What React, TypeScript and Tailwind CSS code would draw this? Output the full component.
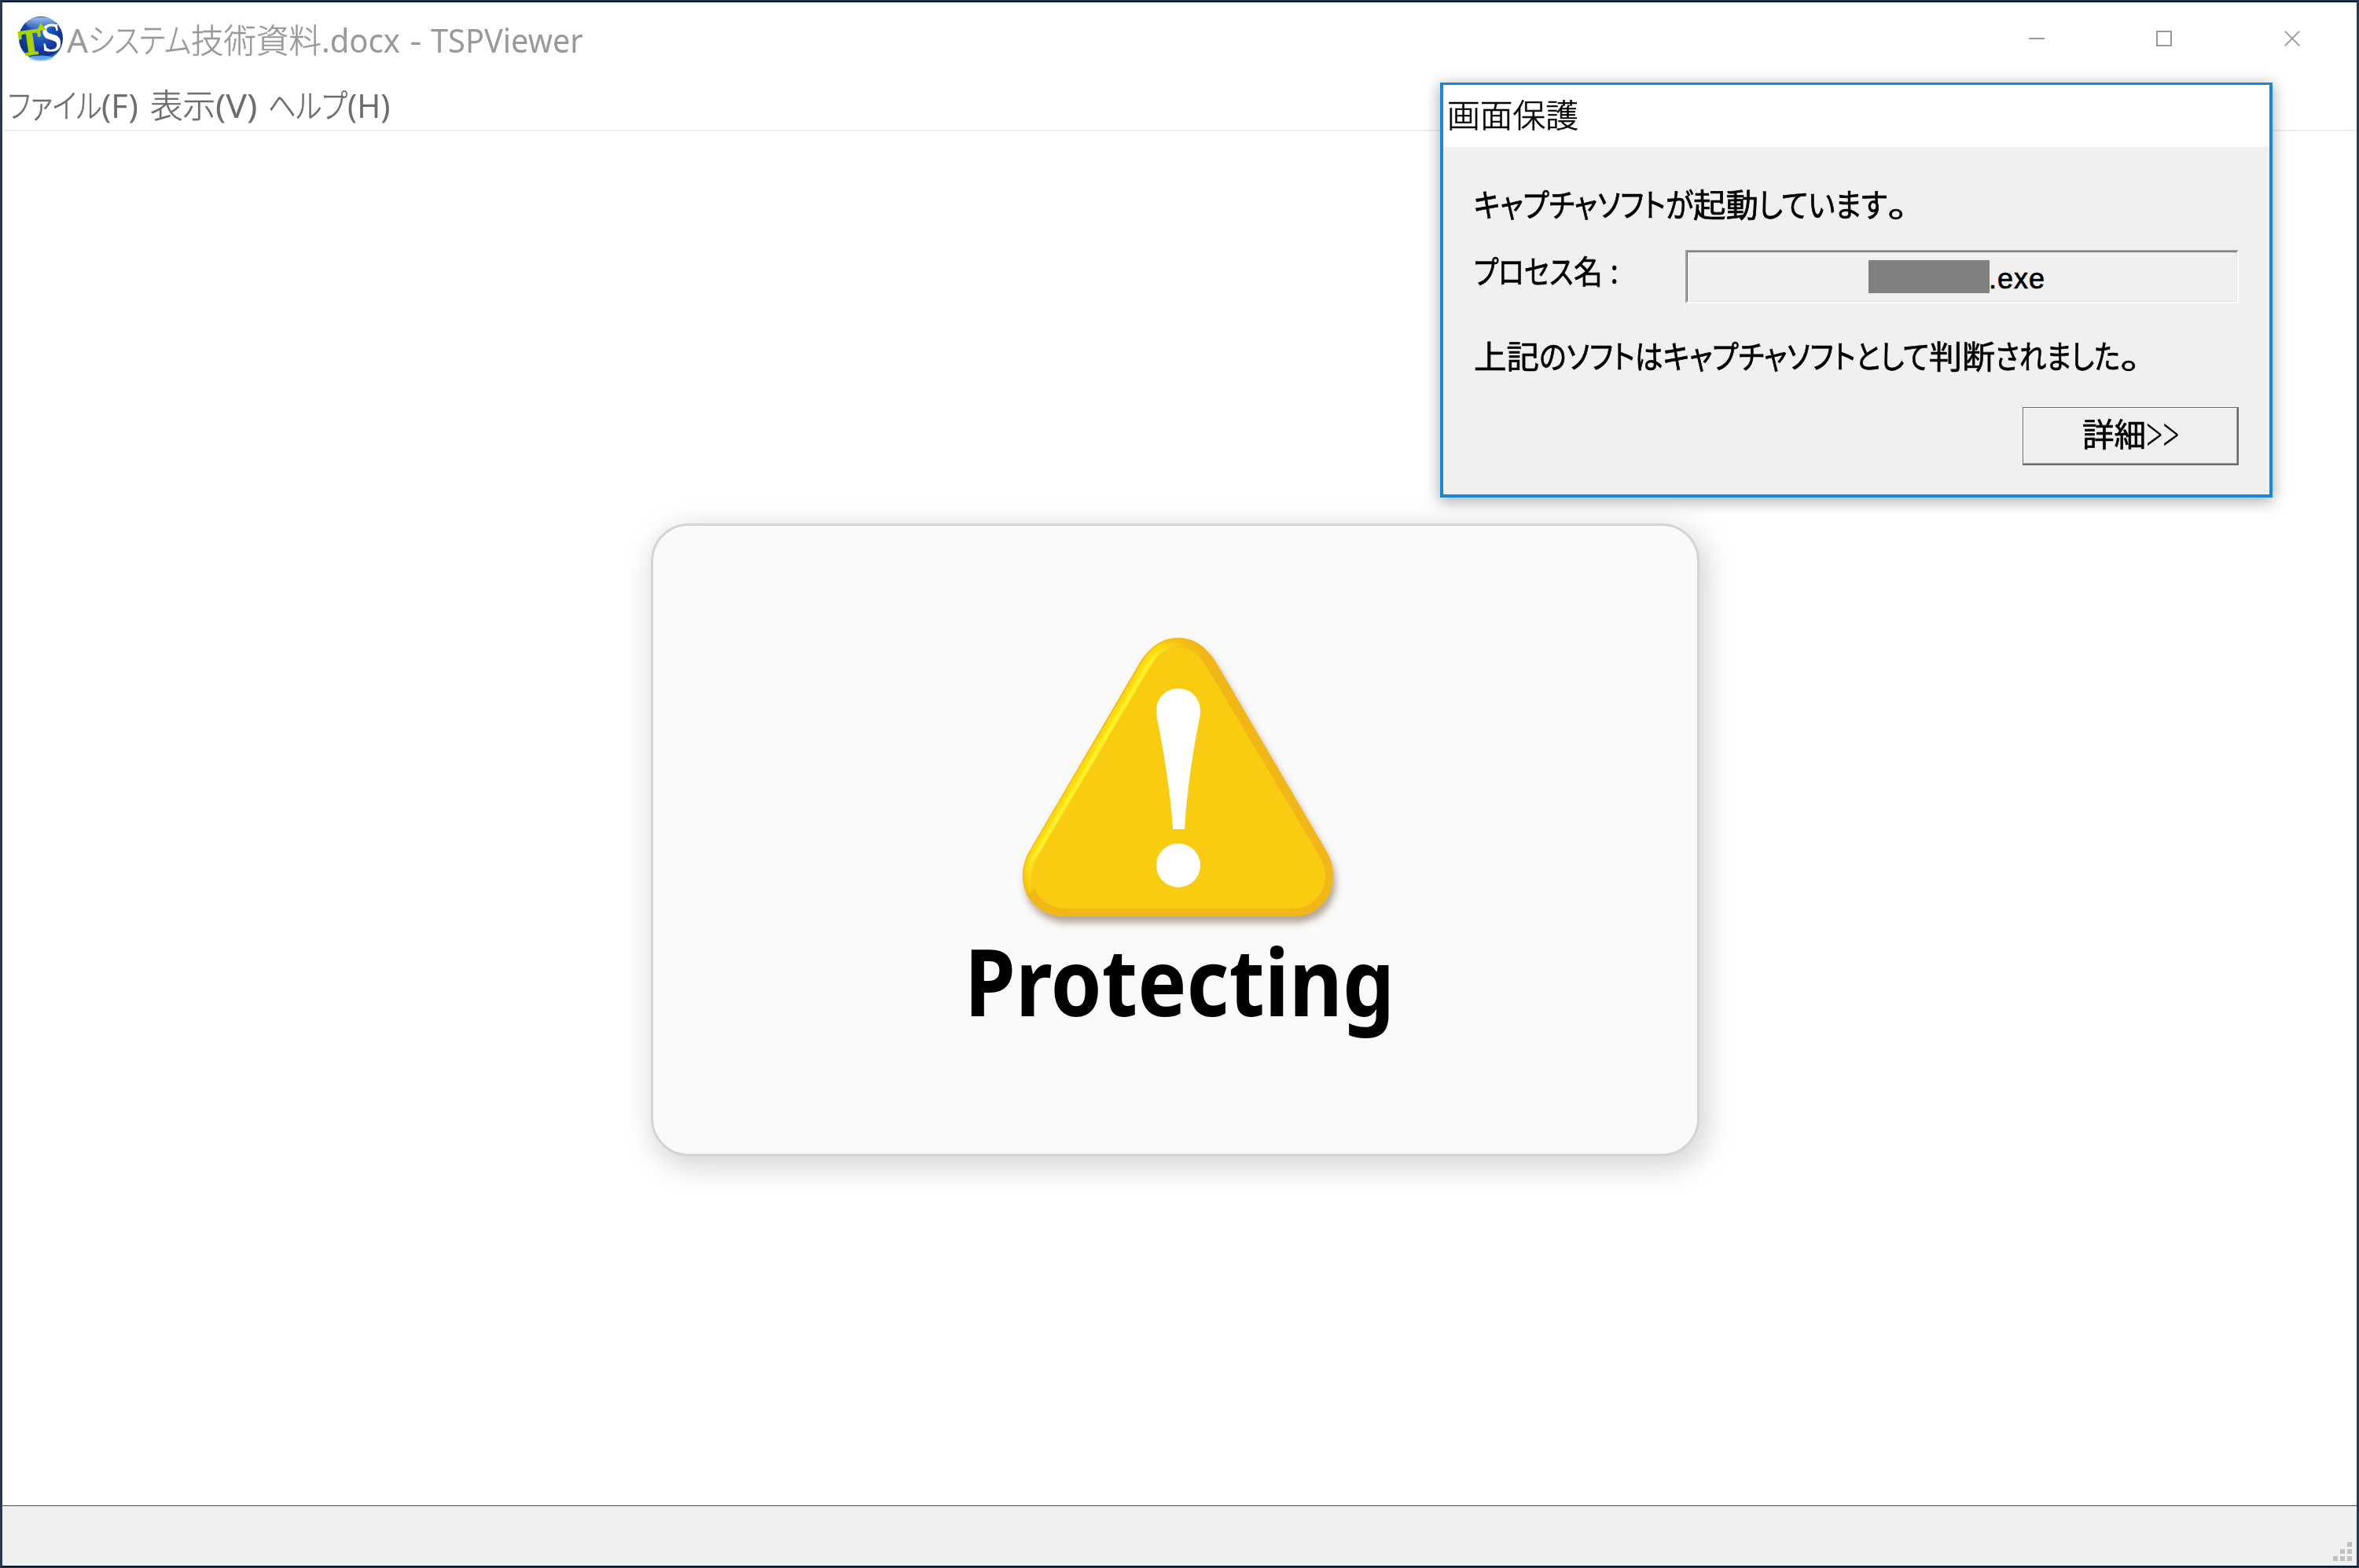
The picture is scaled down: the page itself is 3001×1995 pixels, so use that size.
import React, { useLayoutEffect, useRef, useState } from 'react';

interface FitTextProps {
  text: string;
  className?: string;
}

// Squeezes or stretches a run of text to the width of its own box
const FitText: React.FC<FitTextProps> = ({ text, className = '' }) => {
  const inner = useRef<HTMLSpanElement>(null);
  const [scale, setScale] = useState(1);

  useLayoutEffect(() => {
    const el = inner.current;
    if (!el || !el.parentElement) return;
    setScale(el.parentElement.offsetWidth / el.offsetWidth);
  }, [text]);

  return (
    <span className={`inline-block shrink-0 whitespace-pre ${className}`}>
      <span ref={inner} className="inline-block origin-left" style={{ transform: `scaleX(${scale})` }}>
        {text}
      </span>
    </span>
  );
};

const AppIcon = () => (
  <svg className="w-14 h-14 shrink-0 overflow-visible" viewBox="0 0 56 56">
    <defs>
      <radialGradient id="globe" cx="0.5" cy="0.35" r="0.65">
        <stop offset="0" stopColor="#2f74d8" />
        <stop offset="0.55" stopColor="#1240a8" />
        <stop offset="0.85" stopColor="#0d2f8a" />
        <stop offset="1" stopColor="#4a8fe0" />
      </radialGradient>
      <linearGradient id="shine" x1="0" y1="0" x2="0" y2="1">
        <stop offset="0" stopColor="#b9d6f7" stopOpacity="0.85" />
        <stop offset="1" stopColor="#b9d6f7" stopOpacity="0" />
      </linearGradient>
    </defs>
    <circle cx="28" cy="28" r="28" fill="url(#globe)" />
    <ellipse cx="28" cy="9" rx="19" ry="8" fill="url(#shine)" />
    <ellipse cx="28" cy="53" rx="15" ry="3.5" fill="#7fc4f2" opacity="0.7" />
    <g fontFamily="Liberation Serif, serif" fontWeight="700">
      <text transform="translate(30 45) rotate(-5) scale(.9 1)" fontSize="52" fill="#fff">S</text>
      <text transform="translate(3 50) rotate(-8) scale(.9 1)" fontSize="46" fill="#a8d400" stroke="#a8d400" strokeWidth="2">T</text>
    </g>
    <path d="M22 19 L28 8 L35 17 Z" fill="#a8d400" />
  </svg>
);

const WarningIcon = () => (
  <svg className="w-[480px] h-[420px]" viewBox="0 0 480 420">
    <defs>
      <filter id="soft" x="-10%" y="-10%" width="120%" height="125%">
        <feDropShadow dx="3" dy="8" stdDeviation="5" floodColor="#6b5030" floodOpacity="0.5" />
      </filter>
      <filter id="glow">
        <feGaussianBlur stdDeviation="1.2" />
      </filter>
      <linearGradient id="edge" gradientUnits="userSpaceOnUse" x1="30" y1="362" x2="268" y2="48">
        <stop offset="0" stopColor="#ffd90f" stopOpacity="0" />
        <stop offset="0.12" stopColor="#ffdc0f" />
        <stop offset="0.92" stopColor="#ffdc0f" />
        <stop offset="1" stopColor="#ffd90f" stopOpacity="0" />
      </linearGradient>
      <linearGradient id="edgeLight" gradientUnits="userSpaceOnUse" x1="35" y1="354" x2="264" y2="46">
        <stop offset="0" stopColor="#fff22a" stopOpacity="0" />
        <stop offset="0.15" stopColor="#fff22a" />
        <stop offset="0.88" stopColor="#fff22a" />
        <stop offset="1" stopColor="#fff22a" stopOpacity="0" />
      </linearGradient>
    </defs>
    <path
      filter="url(#soft)"
      fill="#f1b713"
      d="M190 63 C204 41 220 31.5 239 31.5 C258 31.5 274 41 289 66 L427 302 C434 314 436 324 436 335 C436 364 415 386 385 386 L95 386 C64 386 41 364 41 335 C41 322 44 312 50 302 Z"
    />
    {/* lit edge of the bevel */}
    <g fill="none" filter="url(#glow)">
      <path stroke="url(#edge)" strokeWidth="8" d="M50 356 C43 336 47 316 55 304 L195 66 C208 45 222 36 240 36 C252 36 260 40 268 46" />
      <path stroke="url(#edgeLight)" strokeWidth="6" d="M53 352 C48 334 52 316 59 306 L199 70 C210 51 224 42 240 42 C250 42 258 45 266 52" />
    </g>
    <path
      fill="#f9cc12"
      d="M203 69 C213 52 225 44 239 44 C256 44 266 53 276 70 L416 305 C422 315 426 325 426 336 C426 358 408 376 384 376 L98 376 C72 376 53 358 53 336 C53 325 57 316 63 306 Z"
    />
    <path fill="#fff" d="M239 96 C255 96 267 108 267 125 C267 132 265 139 263 149 C255 192 249 238 247 275 L232 275 C230 238 223 192 215 149 C213 139 211 132 211 125 C211 108 223 96 239 96 Z" />
    <circle cx="239" cy="321" r="28" fill="#fff" />
  </svg>
);

const TitleBar = () => (
  <div className="h-[98px] shrink-0 flex items-start text-[#999]">
    <div className="flex items-center pl-[21px] pt-[18px]">
      <AppIcon />
      <div className="flex items-baseline ml-[5px] h-14 text-[42px] leading-[60px]">
        <FitText text="A" className="w-[27px]" />
        <FitText text="システム" className="w-[131px] font-light [-webkit-text-stroke:0.5px_#999]" />
        <FitText text="技術資料" className="w-[166px] font-light [-webkit-text-stroke:0.5px_#999]" />
        <FitText text=".docx" className="w-[100px]" />
        <FitText text=" - " className="w-[39px]" />
        <FitText text="TSPViewer" className="w-[194px]" />
      </div>
    </div>
    <div className="ml-auto mr-[72px] mt-9 flex gap-[142px]">
      <svg className="w-5 h-5" viewBox="0 0 20 20"><path d="M0 10H20" stroke="#999" strokeWidth="2" /></svg>
      <div className="w-5 h-5 mr-px border-2 border-[#999]" />
      <svg className="w-5 h-5" viewBox="0 0 20 20"><path d="M.7.7L19.3 19.3M19.3.7L.7 19.3" stroke="#999" strokeWidth="1.8" /></svg>
    </div>
  </div>
);

const MenuBar = () => (
  <div className="h-[66px] shrink-0 border-b-2 border-[#efefef] flex items-baseline pl-[7px] text-[42px] leading-[66px] text-[#6d6d6d]">
    <div className="flex items-baseline mr-[15px]">
      <FitText text="ファイル" className="w-[119px] font-light [-webkit-text-stroke:0.6px_#6d6d6d]" />
      <FitText text="(F)" className="w-[47px]" />
    </div>
    <div className="flex items-baseline mr-[14px]">
      <FitText text="表示" className="w-[83px] font-light [-webkit-text-stroke:0.6px_#6d6d6d]" />
      <FitText text="(V)" className="w-[53px]" />
    </div>
    <div className="flex items-baseline">
      <FitText text="ヘルプ" className="w-[101px] font-light [-webkit-text-stroke:0.6px_#6d6d6d]" />
      <FitText text="(H)" className="w-[54px]" />
    </div>
  </div>
);

const ProtectDialog = () => (
  <div className="absolute left-[1829px] top-[102px] w-[1059px] h-[528px] flex flex-col bg-[#f0f0f0] border-4 border-t-[3px] border-[#1a86db] text-black text-[41px] leading-[48px] shadow-[0_4px_18px_1px_rgba(0,0,0,0.33)]">
    <div className="h-[79px] shrink-0 bg-white pl-[5px] pt-[14px] font-light">
      <FitText text="画面保護" className="w-[167px] [-webkit-text-stroke:0.6px_black]" />
    </div>
    <div className="pl-[39px] pr-[39px] [-webkit-text-stroke:0.7px_black]">
      <div className="mt-[49px] flex items-baseline">
        <FitText text="キャプチャソフト" className="w-[244px]" />
        <FitText text="が" className="w-[35px]" />
        <FitText text="起動" className="w-[83px]" />
        <FitText text="しています" className="w-[164px]" />
        <FitText text="。" className="w-[27px]" />
      </div>
      <div className="mt-[34px] flex items-start">
        <div className="flex items-baseline w-[269px] pt-[3px]">
          <FitText text="プロセス" className="w-[127px]" />
          <FitText text="名" className="w-[37px]" />
          <FitText text=" :" className="w-[20px]" />
        </div>
        <div className="grow h-[68px] border-2 border-t-[#a0a0a0] border-l-[#a0a0a0] border-r-white border-b-white">
          <div className="h-full border border-t-[#696969] border-l-[#696969] border-r-[#e3e3e3] border-b-[#e3e3e3] flex items-start pl-[230px] pt-[10px]">
            <div className="w-[154px] h-[42px] bg-[#808080]" />
            <span className="font-['Liberation_Sans',sans-serif] text-[36px] leading-[42px] tracking-[1px] mt-[3px] -ml-px">.exe</span>
          </div>
        </div>
      </div>
      <div className="mt-[43px] flex items-baseline">
        <FitText text="上記" className="w-[83px]" />
        <FitText text="のソフトはキャプチャソフトとして" className="w-[496px]" />
        <FitText text="判断" className="w-[84px]" />
        <FitText text="されました" className="w-[159px]" />
        <FitText text="。" className="w-[27px]" />
      </div>
      <div className="mt-[41px] ml-auto w-[275px] h-[74px] border border-r-2 border-b-2 border-[#696969]">
        <div className="h-full border border-t-white border-l-white border-r-[#a0a0a0] border-b-[#a0a0a0] flex items-start pt-[8px] pl-[74px]">
          <FitText text="詳細" className="w-[81px]" />
          <FitText text=">>" className="w-[43px] font-light text-[60px] [-webkit-text-stroke:0]" />
        </div>
      </div>
    </div>
  </div>
);

const gripRows = [1, 2, 3];

const StatusBar = () => (
  <div className="h-[77px] shrink-0 border-t border-[#696969] bg-[#f0f0f0]">
    <div className="h-full border-t border-[#d0d0d0] flex flex-col items-end justify-end gap-[3px] pr-[6px] pb-[6px]">
      {gripRows.map((count) => (
        <div key={count} className="flex gap-[3px]">
          {Array.from({ length: count }, (_, i) => (
            <div key={i} className="w-[6px] h-[6px] bg-[#bfbfbf]" />
          ))}
        </div>
      ))}
    </div>
  </div>
);

const App: React.FC = () => {
  return (
    <div className="w-[3001px] h-[1995px] bg-[#2b3b4d] p-px font-['Noto_Sans','Noto_Sans_CJK_JP',sans-serif] [font-feature-settings:'palt'] overflow-hidden">
      <div className="h-full border-2 border-x-[#283a4e] border-y-[#001c3d]">
        <div className="relative h-full flex flex-col bg-white">
          <TitleBar />
          <MenuBar />
          <div className="grow flex justify-center items-start pt-[499px]">
            <div className="w-[1334px] h-[805px] mr-[11px] rounded-[48px] border-[3px] border-[#d4d4d4] bg-[#fafafa] shadow-[6px_10px_36px_4px_rgba(0,0,0,0.17)] flex flex-col items-center pt-[111px] pl-[10px]">
              <WarningIcon />
              <FitText text="Protecting" className="-mt-[33px] w-[547px] font-bold text-[119px] leading-[160px] text-black" />
            </div>
          </div>
          <StatusBar />
          <ProtectDialog />
        </div>
      </div>
    </div>
  );
};

export default App;
